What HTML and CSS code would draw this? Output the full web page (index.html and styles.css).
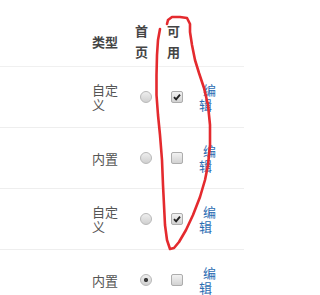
FILE: index.html
```html
<!DOCTYPE html>
<html lang="zh-CN">
<head>
<meta charset="utf-8">
<link rel="stylesheet" href="styles.css">
</head>
<body>
<div class="page">
  <table class="types">
    <colgroup>
      <col class="c-lead"><col class="c-type"><col class="c-home"><col class="c-use"><col class="c-op">
    </colgroup>
    <thead>
      <tr>
        <th></th>
        <th class="th-type">类型</th>
        <th class="th-narrow">首页</th>
        <th class="th-narrow">可用</th>
        <th></th>
      </tr>
    </thead>
    <tbody>
      <tr>
        <td></td>
        <td class="type">自定义</td>
        <td class="ctl"><input class="radio" type="radio" name="home"></td>
        <td class="ctl"><input class="check" type="checkbox" checked></td>
        <td class="op"><a href="#">编辑</a></td>
      </tr>
      <tr>
        <td></td>
        <td class="type">内置</td>
        <td class="ctl"><input class="radio" type="radio" name="home"></td>
        <td class="ctl"><input class="check" type="checkbox"></td>
        <td class="op"><a href="#">编辑</a></td>
      </tr>
      <tr>
        <td></td>
        <td class="type">自定义</td>
        <td class="ctl"><input class="radio" type="radio" name="home"></td>
        <td class="ctl"><input class="check" type="checkbox" checked></td>
        <td class="op"><a href="#">编辑</a></td>
      </tr>
      <tr>
        <td></td>
        <td class="type">内置</td>
        <td class="ctl"><input class="radio" type="radio" name="home" checked></td>
        <td class="ctl"><input class="check" type="checkbox"></td>
        <td class="op"><a href="#">编辑</a></td>
      </tr>
    </tbody>
  </table>
  <svg class="annot" width="244" height="295" viewBox="0 0 244 295" aria-hidden="true">
    <path d="M160,29 L158,40 L157,55 L156.5,75 L156.5,95 L158,115 L160,135 L162,160 L163,185 L164,205 L165,225 L167,240 L170,249 L174,248 L179,242 L186,230 L193,215 L200,197 L205,180 L208,165 L210,145 L210,125 L208,105 L204,88 L199,73 L195,60 L192,45 L190,32 L190,24 L187,18 L180,17 L172,17 L168,20 L167,24"/>
  </svg>
</div>
</body>
</html>
```

FILE: styles.css
```css
html, body {
  margin: 0;
  padding: 0;
  background: #ffffff;
}

body {
  font-family: "Noto Sans CJK SC", "Noto Sans", sans-serif;
  font-size: 13px;
  color: #555555;
  overflow: hidden;
}

.page {
  position: relative;
  width: 244px;
  height: 295px;
  padding-top: 16px;
  box-sizing: border-box;
  overflow: hidden;
}

.types {
  border-collapse: collapse;
  table-layout: fixed;
  width: 244px;
}

.c-lead { width: 80px; }
.c-type { width: 50px; }
.c-home { width: 32px; }
.c-use { width: 30px; }
.c-op { width: 52px; }

.types th {
  height: 50px;
  padding: 0 5px;
  font-weight: bold;
  color: #444444;
  line-height: 21px;
  text-align: left;
  vertical-align: middle;
  border-bottom: 1px solid #f0f0f0;
}

.types th.th-type {
  padding: 0 8px 0 12px;
}

.types td {
  height: 60px;
  padding: 0;
  vertical-align: middle;
  border-bottom: 1px solid #eeeeee;
}

.types td.type {
  padding: 0 8px 0 12px;
  line-height: 15px;
  color: #555555;
}

.types td.ctl {
  text-align: center;
  line-height: 0;
}

.types td.op {
  padding: 0 25px 0 7px;
  text-indent: 4px;
  line-height: 15.5px;
}

.op a {
  color: #2c6db3;
  text-decoration: none;
}

.radio {
  appearance: none;
  -webkit-appearance: none;
  display: inline-block;
  width: 12px;
  height: 12px;
  margin: 0;
  border: 1px solid #b9b9b9;
  border-radius: 50%;
  background: linear-gradient(#eeeeee, #d0d0d0);
  box-sizing: border-box;
  vertical-align: middle;
}

.radio:checked {
  background: radial-gradient(circle, #3a3a3a 0 1.8px, rgba(0,0,0,0) 2.4px), linear-gradient(#eeeeee, #d0d0d0);
}

.check {
  appearance: none;
  -webkit-appearance: none;
  display: inline-block;
  width: 12px;
  height: 12px;
  margin: 0;
  border: 1px solid #adadad;
  border-radius: 2px;
  background: linear-gradient(#f2f2f2, #d2d2d2);
  box-sizing: border-box;
  vertical-align: middle;
}

.check:checked {
  background: url("data:image/svg+xml;utf8,<svg xmlns='http://www.w3.org/2000/svg' viewBox='0 0 10 10'><path d='M2 5.2 L4.1 7.4 L8 2.6' fill='none' stroke='%23222' stroke-width='1.9'/></svg>") center / 10px 10px no-repeat, linear-gradient(#f2f2f2, #d2d2d2);
}

.annot {
  position: absolute;
  left: 0;
  top: 0;
  pointer-events: none;
}

.annot path {
  fill: none;
  stroke: #e42a2e;
  stroke-width: 2.6;
  stroke-linecap: round;
  stroke-linejoin: round;
}
```
